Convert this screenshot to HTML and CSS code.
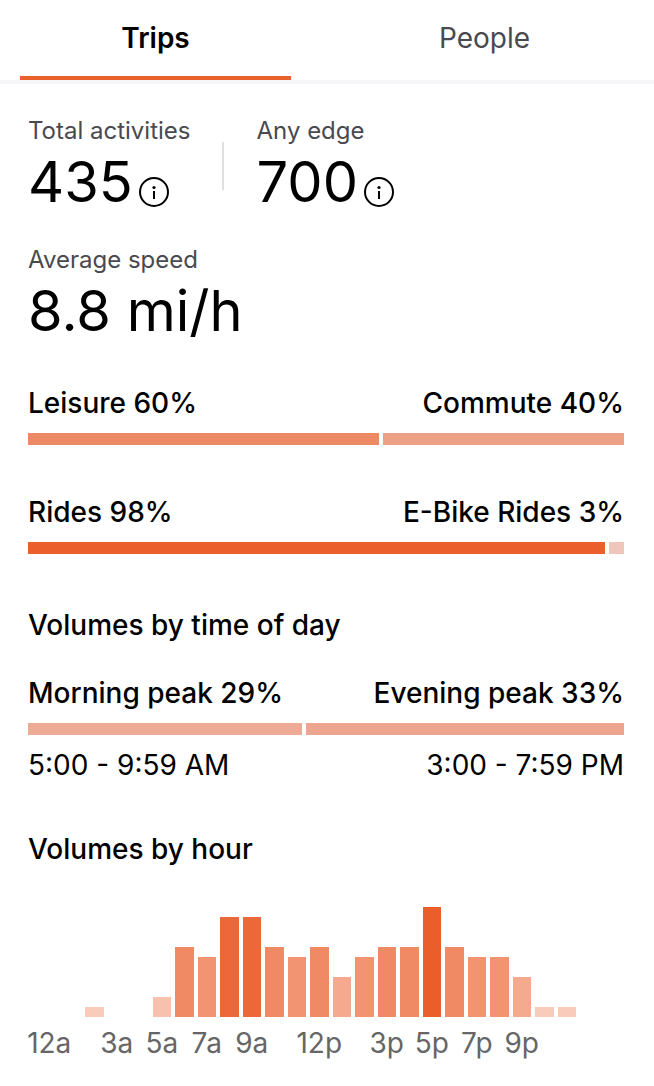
FILE: index.html
```html
<!DOCTYPE html>
<html lang="en">
<head>
    <meta charset="UTF-8">
    <meta name="viewport" content="width=device-width, initial-scale=1.0">
    <title>Trips</title>
    <link rel="stylesheet" href="styles.css">
</head>
<body>
    <!-- Tabs -->
    <div class="tabs" role="tablist">
        <button type="button" class="tab active" role="tab" aria-selected="true">Trips</button>
        <button type="button" class="tab" role="tab" aria-selected="false">People</button>
    </div>

    <main class="panel">
        <!-- Totals -->
        <div class="metrics">
            <div class="metric">
                <div class="metric-label">Total activities</div>
                <div class="metric-value">
                    <span>435</span>
                    <button type="button" class="info-btn" aria-label="About total activities">
                        <svg viewBox="0 0 30 30" width="30" height="30">
                            <circle cx="15" cy="15" r="14" fill="none" stroke="#000" stroke-width="2"/>
                            <circle cx="15" cy="10.5" r="1.6"/>
                            <rect x="14" y="14" width="2" height="8"/>
                        </svg>
                    </button>
                </div>
            </div>
            <div class="divider"></div>
            <div class="metric">
                <div class="metric-label">Any edge</div>
                <div class="metric-value">
                    <span>700</span>
                    <button type="button" class="info-btn" aria-label="About any edge">
                        <svg viewBox="0 0 30 30" width="30" height="30">
                            <circle cx="15" cy="15" r="14" fill="none" stroke="#000" stroke-width="2"/>
                            <circle cx="15" cy="10.5" r="1.6"/>
                            <rect x="14" y="14" width="2" height="8"/>
                        </svg>
                    </button>
                </div>
            </div>
        </div>
        <div class="metric">
            <div class="metric-label">Average speed</div>
            <div class="metric-value">8.8 mi/h</div>
        </div>

        <!-- Splits -->
        <section class="split">
            <div class="split-labels"><span>Leisure 60%</span><span>Commute 40%</span></div>
            <div class="split-bar">
                <div class="leisure" style="flex-grow: 593"></div>
                <div class="commute" style="flex-grow: 407"></div>
            </div>
        </section>
        <section class="split">
            <div class="split-labels"><span>Rides 98%</span><span>E-Bike Rides 3%</span></div>
            <div class="split-bar">
                <div class="rides" style="flex-grow: 975"></div>
                <div class="ebike" style="flex-grow: 25"></div>
            </div>
        </section>

        <!-- Time of day -->
        <h2>Volumes by time of day</h2>
        <section class="split peaks">
            <div class="split-labels"><span>Morning peak 29%</span><span>Evening peak 33%</span></div>
            <div class="split-bar">
                <div class="morning" style="flex-grow: 463"></div>
                <div class="evening" style="flex-grow: 537"></div>
            </div>
            <div class="split-times"><span>5:00 - 9:59 AM</span><span>3:00 - 7:59 PM</span></div>
        </section>

        <!-- Hourly chart -->
        <h2>Volumes by hour</h2>
        <div class="chart" id="chart"></div>
        <div class="axis" id="axis"></div>
    </main>

    <script src="script.js"></script>
</body>
</html>
```
FILE: styles.css
```css
* {
    margin: 0;
    padding: 0;
    box-sizing: border-box;
}
body {
    font-family: Inter, sans-serif;
    font-size: 28px;
    line-height: 40px;
    background: #fff;
    color: #000;
}
button {
    font: inherit;
    background: none;
    border: none;
    cursor: pointer;
}
.tabs {
    display: grid;
    grid-template-columns: 1fr 1fr;
    column-gap: 58px;
    padding: 0 34px 0 20px;
    border-bottom: 4px solid #f6f6f9;
}
.tab {
    height: 80px;
    border-bottom: 4px solid transparent;
    color: #494950;
}
.tab.active {
    border-bottom-color: #e8602c;
    color: #000;
    font-weight: 600;
}
.panel {
    padding: 31px 30px 22px 28px;
}
.metrics {
    display: flex;
    align-items: center;
    margin-bottom: 27px;
}
.metric-label {
    font-size: 24px;
    line-height: 32px;
    color: #494950;
}
.metric-value {
    display: flex;
    align-items: center;
    gap: 6px;
    font-size: 56px;
    line-height: 70px;
}
.info-btn {
    display: flex;
    margin-top: 20px;
}
.divider {
    width: 2px;
    height: 48px;
    margin: 0 33px 0 31px;
    background: #dfdfe8;
}
.split {
    margin: 37px 0 47px;
}
.split + .split {
    margin: 0 0 51px;
}
.split-labels, .split-times {
    display: flex;
    justify-content: space-between;
}
.split-labels {
    margin-bottom: 10px;
    font-weight: 500;
}
.split-bar {
    display: flex;
    gap: 4px;
    height: 12px;
}
.leisure {
    background: #ed8a66;
}
.commute {
    background: #eca086;
}
.rides {
    background: #eb5f2c;
}
.ebike {
    background: #eec6bc;
}
.morning {
    background: #edab96;
}
.evening {
    background: #eda590;
}
h2 {
    font-size: 28px;
    font-weight: 500;
}
.split.peaks {
    margin: 28px 0 44px;
}
.split-times {
    margin-top: 10px;
}
.chart, .axis {
    display: grid;
    grid-template-columns: repeat(24, minmax(0, 1fr));
    margin: 0 46px 0 10px;
}
.chart {
    height: 110px;
    margin-top: 38px;
    align-items: end;
}
.bar {
    margin: 0 2px;
    background: #e95e2a;
}
.axis {
    margin-top: 6px;
    color: #666;
}
.tick {
    display: flex;
    justify-content: center;
    white-space: nowrap;
}
```
FILE: script.js
```js
const hours = [0, 0, 1, 0, 0, 2, 7, 6, 10, 10, 7, 6, 7, 4, 6, 7, 7, 11, 7, 6, 6, 4, 1, 1];
const ticks = { 0: '12a', 3: '3a', 5: '5a', 7: '7a', 9: '9a', 12: '12p', 15: '3p', 17: '5p', 19: '7p', 21: '9p' };
const colors = { 1: '#f8cbbb', 2: '#f8c1ad', 4: '#f5aa8f', 6: '#f29471', 7: '#f08a64', 10: '#ed6838', 11: '#e95e2a' };

const chart = document.getElementById('chart');
const axis = document.getElementById('axis');
const max = Math.max(...hours);

hours.forEach(function(count, hour) {
    const bar = document.createElement('div');
    bar.className = 'bar';
    bar.style.height = (count / max * 110) + 'px';
    bar.style.background = colors[count] || 'none';
    chart.appendChild(bar);

    const tick = document.createElement('div');
    tick.className = 'tick';
    tick.textContent = ticks[hour] || '';
    axis.appendChild(tick);
});
```
